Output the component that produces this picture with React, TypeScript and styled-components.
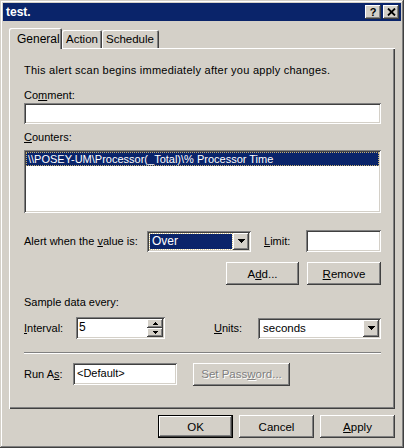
import React from 'react'
import styled, { createGlobalStyle, css } from 'styled-components'

const Global = createGlobalStyle`
  html, body { margin: 0; padding: 0; background: #d4d0c8; }
  body {
    font-family: "Liberation Sans", Arial, sans-serif;
    font-size: 11px;
    color: #000;
  }
  * { box-sizing: border-box; }
`

const raised = css`
  box-shadow: inset -1px -1px #404040, inset 1px 1px #fff,
    inset -2px -2px #808080, inset 2px 2px #d4d0c8;
`

const sunken = css`
  box-shadow: inset 1px 1px #808080, inset -1px -1px #fff,
    inset 2px 2px #404040, inset -2px -2px #d4d0c8;
`

const Window = styled.div`
  width: 404px;
  height: 448px;
  background: #d4d0c8;
  padding: 3px;
  display: flex;
  flex-direction: column;
  box-shadow: inset -1px -1px #404040, inset 1px 1px #d4d0c8,
    inset -2px -2px #808080, inset 2px 2px #fff;
`

const TitleBar = styled.div`
  height: 18px;
  background: #0a246a;
  display: flex;
  align-items: center;
  justify-content: space-between;
  padding: 0 2px 0 3px;
`

const Title = styled.span`
  color: #fff;
  font-weight: bold;
  font-size: 12px;
`

const CaptionButtons = styled.div`
  display: flex;
  gap: 2px;
`

const CaptionButton = styled.div`
  width: 16px;
  height: 14px;
  background: #d4d0c8;
  ${raised};
  display: flex;
  align-items: center;
  justify-content: center;
  font-weight: bold;
  font-size: 11px;
  line-height: 1;
`

const Body = styled.div`
  flex: 1;
  padding: 7px 6px 0 6px;
  display: flex;
  flex-direction: column;
`

const TabStrip = styled.div`
  height: 20px;
  display: flex;
  align-items: flex-end;
  position: relative;
  z-index: 1;
`

const Tab = styled.div<{ $active?: boolean; $w: number }>`
  width: ${(p) => p.$w}px;
  height: ${(p) => (p.$active ? 21 : 18)}px;
  margin-bottom: ${(p) => (p.$active ? -1 : 0)}px;
  background: #d4d0c8;
  border-radius: 2px 2px 0 0;
  box-shadow: inset 1px 1px #fff, inset -1px 0 #404040, inset -2px 0 #808080;
  display: flex;
  align-items: flex-start;
  padding: ${(p) => (p.$active ? '4px 0 0 8px' : '3px 0 0 4px')};
  font-size: ${(p) => (p.$active ? 12 : 11.5)}px;
`

const Panel = styled.div`
  width: 386px;
  height: 361px;
  padding: 16px 14px 0 15px;
  display: flex;
  flex-direction: column;
  box-shadow: inset 1px 1px #fff, inset -1px -1px #404040, inset -2px -2px #808080;
`

const Text = styled.div<{ $mt?: number; $wide?: boolean }>`
  line-height: 13px;
  height: 13px;
  margin-top: ${(p) => p.$mt ?? 0}px;
  letter-spacing: ${(p) => (p.$wide ? 0.25 : 0)}px;
  white-space: nowrap;
`

const Field = styled.div<{ $mt?: number; $w?: number; $h?: number; $fill?: boolean }>`
  margin-top: ${(p) => p.$mt ?? 0}px;
  ${(p) => (p.$w ? `width: ${p.$w}px;` : '')}
  ${(p) => (p.$fill ? 'flex: 1;' : 'flex: none;')}
  height: ${(p) => p.$h ?? 21}px;
  background: #fff;
  ${sunken};
  padding: 3px 4px;
  line-height: 15px;
  white-space: nowrap;
`

const ListBox = styled.div`
  margin-top: 6px;
  height: 63px;
  background: #fff;
  ${sunken};
  padding: 2px;
`

const ListRow = styled.div<{ $sel?: boolean }>`
  height: 14px;
  line-height: 14px;
  padding-left: 2px;
  background: ${(p) => (p.$sel ? '#0a246a' : 'transparent')};
  color: ${(p) => (p.$sel ? '#fff' : '#000')};
  outline: ${(p) => (p.$sel ? '1px dotted #c8b070' : 'none')};
  outline-offset: -1px;
`

const Row = styled.div<{ $mt: number; $h?: number; $end?: boolean }>`
  margin-top: ${(p) => p.$mt}px;
  height: ${(p) => p.$h ?? 22}px;
  display: flex;
  align-items: center;
  justify-content: ${(p) => (p.$end ? 'flex-end' : 'flex-start')};
`

const Label = styled.span<{ $w: number; $ml?: number }>`
  width: ${(p) => p.$w}px;
  margin-left: ${(p) => p.$ml ?? 0}px;
  flex: none;
  white-space: nowrap;
`

const Combo = styled.div<{ $w?: number }>`
  ${(p) => (p.$w ? `width: ${p.$w}px; flex: none;` : 'flex: 1;')}
  height: 21px;
  background: #fff;
  ${sunken};
  padding: 2px;
  display: flex;
`

const ComboValue = styled.div<{ $sel?: boolean }>`
  flex: 1;
  margin: 1px;
  padding-left: 2px;
  line-height: 15px;
  background: ${(p) => (p.$sel ? '#0a246a' : 'transparent')};
  color: ${(p) => (p.$sel ? '#fff' : '#000')};
  outline: ${(p) => (p.$sel ? '1px dotted #d4c48c' : 'none')};
  font-size: ${(p) => (p.$sel ? 12 : 11.5)}px;
`

const DropButton = styled.div`
  width: 16px;
  background: #d4d0c8;
  ${raised};
  display: flex;
  align-items: center;
  justify-content: center;
`

const Spin = styled.div`
  width: 89px;
  height: 22px;
  flex: none;
  background: #fff;
  ${sunken};
  padding: 2px;
  display: flex;
`

const SpinValue = styled.div`
  flex: 1;
  padding-left: 1px;
  font-size: 12px;
  line-height: 16px;
`

const SpinButtons = styled.div`
  width: 16px;
  display: flex;
  flex-direction: column;
`

const SpinButton = styled.div`
  flex: 1;
  background: #d4d0c8;
  ${raised};
  display: flex;
  align-items: center;
  justify-content: center;
`

const Button = styled.div<{ $w: number; $ml?: number; $default?: boolean; $disabled?: boolean }>`
  width: ${(p) => p.$w}px;
  height: 23px;
  margin-left: ${(p) => p.$ml ?? 0}px;
  background: #d4d0c8;
  flex: none;
  display: flex;
  align-items: center;
  justify-content: center;
  white-space: nowrap;
  font-size: 11.5px;
  color: ${(p) => (p.$disabled ? '#808080' : '#000')};
  text-shadow: ${(p) => (p.$disabled ? '1px 1px #fff' : 'none')};
  box-shadow: ${(p) =>
    p.$default
      ? 'inset 0 0 0 1px #000, inset -2px -2px #404040, inset 2px 2px #fff, inset -3px -3px #808080'
      : 'inset -1px -1px #404040, inset 1px 1px #fff, inset -2px -2px #808080, inset 2px 2px #d4d0c8'};
`

const Separator = styled.div`
  margin-top: 13px;
  height: 2px;
  border-top: 1px solid #808080;
  border-bottom: 1px solid #fff;
`

const Footer = styled.div`
  margin-top: 6px;
  display: flex;
  justify-content: flex-end;
  gap: 6px;
`

const Arrow = ({ up, small }: { up?: boolean; small?: boolean }) => {
  const w = small ? 5 : 7
  const h = small ? 3 : 4
  return (
    <svg width={w} height={h} viewBox={`0 0 ${w} ${h}`} shapeRendering="crispEdges">
      <polygon
        points={up ? `${w / 2},0 ${w},${h} 0,${h}` : `0,0 ${w},0 ${w / 2},${h}`}
        fill="#000"
      />
    </svg>
  )
}

const CloseGlyph = () => (
  <svg width="9" height="8" viewBox="0 0 9 8">
    <path d="M1 0.5 L8 7.5 M8 0.5 L1 7.5" stroke="#000" strokeWidth="1.8" />
  </svg>
)

const App: React.FC = () => {
  return (
    <>
      <Global />
      <Window>
        <TitleBar>
          <Title>test.</Title>
          <CaptionButtons>
            <CaptionButton>?</CaptionButton>
            <CaptionButton>
              <CloseGlyph />
            </CaptionButton>
          </CaptionButtons>
        </TitleBar>
        <Body>
          <TabStrip>
            <Tab $active $w={53}>General</Tab>
            <Tab $w={40}>Action</Tab>
            <Tab $w={57}>Schedule</Tab>
          </TabStrip>
          <Panel>
            <Text $wide>This alert scan begins immediately after you apply changes.</Text>
            <Text $mt={12}>
              Co<u>m</u>ment:
            </Text>
            <Field $mt={1} />
            <Text $mt={7}>
              <u>C</u>ounters:
            </Text>
            <ListBox>
              <ListRow $sel>\\POSEY-UM\Processor(_Total)\% Processor Time</ListRow>
            </ListBox>
            <Row $mt={17}>
              <Label $w={123}>
                Alert when the <u>v</u>alue is:
              </Label>
              <Combo $w={104}>
                <ComboValue $sel>Over</ComboValue>
                <DropButton>
                  <Arrow />
                </DropButton>
              </Combo>
              <Label $w={42} $ml={13}>
                <u>L</u>imit:
              </Label>
              <Field $h={22} $fill />
            </Row>
            <Row $mt={10} $h={23} $end>
              <Button $w={73}>
                A<u>d</u>d...
              </Button>
              <Button $w={74} $ml={8}>
                <u>R</u>emove
              </Button>
            </Row>
            <Text $mt={11}>Sample data every:</Text>
            <Row $mt={8}>
              <Label $w={52}>
                <u>I</u>nterval:
              </Label>
              <Spin>
                <SpinValue>5</SpinValue>
                <SpinButtons>
                  <SpinButton>
                    <Arrow up small />
                  </SpinButton>
                  <SpinButton>
                    <Arrow small />
                  </SpinButton>
                </SpinButtons>
              </Spin>
              <Label $w={44} $ml={49}>
                <u>U</u>nits:
              </Label>
              <Combo>
                <ComboValue>seconds</ComboValue>
                <DropButton>
                  <Arrow />
                </DropButton>
              </Combo>
            </Row>
            <Separator />
            <Row $mt={9}>
              <Label $w={49}>
                Run A<u>s</u>:
              </Label>
              <Field $w={104} $h={22}>&lt;Default&gt;</Field>
              <Button $w={97} $ml={16} $disabled>
                Set Pass<u>w</u>ord...
              </Button>
            </Row>
          </Panel>
          <Footer>
            <Button $w={75} $default>
              OK
            </Button>
            <Button $w={75}>Cancel</Button>
            <Button $w={75}>
              <u>A</u>pply
            </Button>
          </Footer>
        </Body>
      </Window>
    </>
  )
}

export default App
